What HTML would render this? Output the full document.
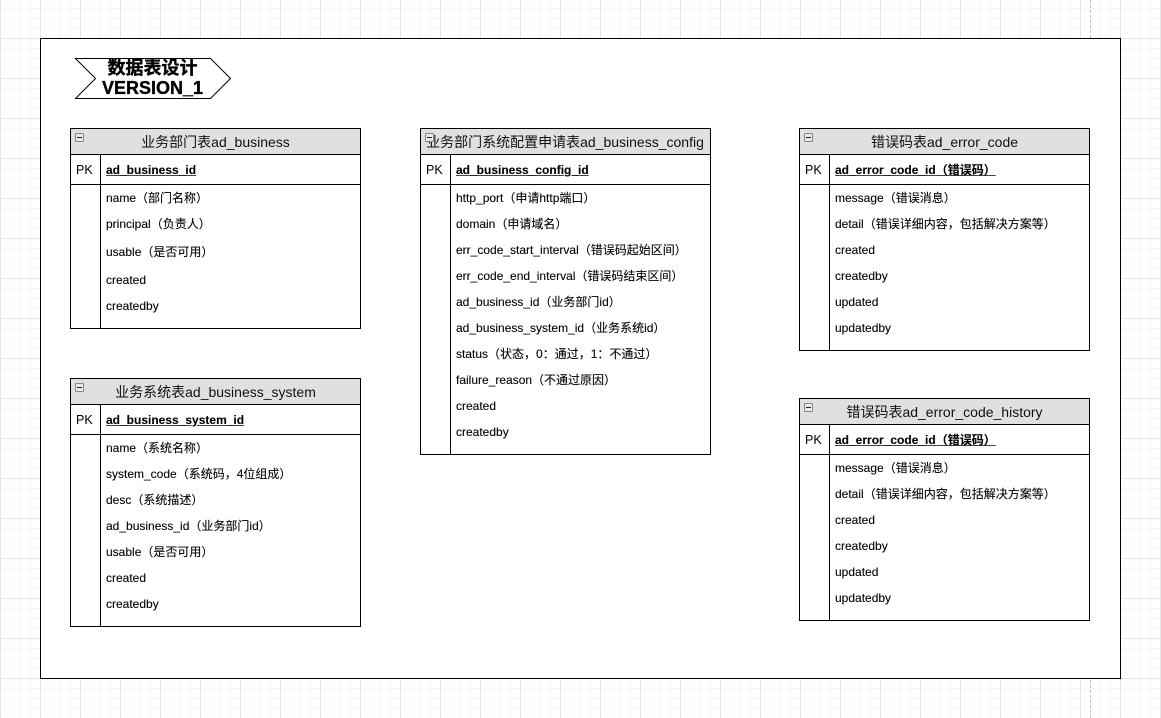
<!DOCTYPE html>
<html lang="zh">
<head>
<meta charset="utf-8">
<title>数据表设计</title>
<style>
html,body{margin:0;padding:0;width:1161px;height:718px;overflow:hidden;background:#fff}
body{position:relative;font-family:"Liberation Sans","Noto Sans CJK SC",sans-serif;color:#000;
background-image:
linear-gradient(to right,#e6e6e6 1px,transparent 1px),
linear-gradient(to bottom,#e6e6e6 1px,transparent 1px),
linear-gradient(to right,#f7f7f7 1px,transparent 1px),
linear-gradient(to bottom,#f7f7f7 1px,transparent 1px);
background-size:40px 40px,40px 40px,10px 10px,10px 10px;
background-position:0 0,0 38px,0 0,0 8px}
.a{position:absolute}
.frame{left:40px;top:38px;width:1079px;height:639px;border:1px solid #000;background:#fff}
.dash{left:1090px;top:0;width:0;height:718px;border-left:1px dashed #c4c4c4}
.t{position:absolute;box-sizing:border-box;width:291px;border:1px solid #000;background:#fff}
.h{position:absolute;left:0;top:0;width:289px;height:25px;background:#e0e0e0;border-bottom:1px solid #000;text-align:center;font-size:14px;line-height:26px;white-space:nowrap;color:#111}
.k{position:absolute;left:0;top:26px;width:289px;height:29px;border-bottom:1px solid #000}
.v{position:absolute;left:29px;top:26px;bottom:0;width:1px;background:#000}
.pk{position:absolute;left:5px;top:32px;font-size:12.5px;line-height:18px}
.ico{position:absolute;left:4px;top:4px;box-sizing:border-box;width:9px;height:9px;border:1px solid #808890;border-radius:1px;background:#e4e9ee}
.ico:after{content:"";position:absolute;left:1px;top:3px;width:5px;height:1px;background:#222}
.r,.b{position:absolute;font-size:12px;line-height:18px;white-space:pre;height:18px;-webkit-text-stroke:.1px #000}
.b{font-weight:bold;text-decoration:underline;text-decoration-color:#444}
.x{left:35px}
.ttl{left:75px;width:155px;text-align:center;font-weight:bold;font-size:18px;line-height:22px;height:22px;white-space:nowrap;-webkit-text-stroke:.35px #000}
</style>
</head>
<body>
<div class="a dash"></div>
<div class="a frame"></div>

<svg class="a" style="left:0;top:0" width="1161" height="718">
<polygon points="75.5,58.5 210.5,58.5 230.5,78.5 210.5,98.5 75.5,98.5 95.5,78.5" fill="#fff" stroke="#000" stroke-width="1"/>
</svg>
<div class="a ttl" style="top:57px">数据表设计</div>
<div class="a ttl" style="top:77px">VERSION_1</div>

<div class="t" style="left:70px;top:128px;height:201px">
<div class="h">业务部门表ad_business</div><div class="ico"></div><div class="k"></div><div class="v"></div>
<div class="pk">PK</div>
<div class="b x" style="top:32px">ad_business_id</div>
<div class="r x" style="top:60px">name（部门名称）</div>
<div class="r x" style="top:86px">principal（负责人）</div>
<div class="r x" style="top:114px">usable（是否可用）</div>
<div class="r x" style="top:142px">created</div>
<div class="r x" style="top:168px">createdby</div>
</div>

<div class="t" style="left:70px;top:378px;height:249px">
<div class="h">业务系统表ad_business_system</div><div class="ico"></div><div class="k"></div><div class="v"></div>
<div class="pk">PK</div>
<div class="b x" style="top:32px">ad_business_system_id</div>
<div class="r x" style="top:60px">name（系统名称）</div>
<div class="r x" style="top:86px">system_code（系统码，4位组成）</div>
<div class="r x" style="top:112px">desc（系统描述）</div>
<div class="r x" style="top:138px">ad_business_id（业务部门id）</div>
<div class="r x" style="top:164px">usable（是否可用）</div>
<div class="r x" style="top:190px">created</div>
<div class="r x" style="top:216px">createdby</div>
</div>

<div class="t" style="left:420px;top:128px;height:327px">
<div class="h" style="text-indent:-1px">业务部门系统配置申请表ad_business_config</div><div class="ico"></div><div class="k"></div><div class="v"></div>
<div class="pk">PK</div>
<div class="b x" style="top:32px">ad_business_config_id</div>
<div class="r x" style="top:60px">http_port（申请http端口）</div>
<div class="r x" style="top:86px">domain（申请域名）</div>
<div class="r x" style="top:112px">err_code_start_interval（错误码起始区间）</div>
<div class="r x" style="top:138px">err_code_end_interval（错误码结束区间）</div>
<div class="r x" style="top:164px">ad_business_id（业务部门id）</div>
<div class="r x" style="top:190px">ad_business_system_id（业务系统id）</div>
<div class="r x" style="top:216px">status（状态，0：通过，1：不通过）</div>
<div class="r x" style="top:242px">failure_reason（不通过原因）</div>
<div class="r x" style="top:268px">created</div>
<div class="r x" style="top:294px">createdby</div>
</div>

<div class="t" style="left:799px;top:128px;height:223px">
<div class="h">错误码表ad_error_code</div><div class="ico"></div><div class="k"></div><div class="v"></div>
<div class="pk">PK</div>
<div class="b x" style="top:32px">ad_error_code_id（错误码）</div>
<div class="r x" style="top:60px">message（错误消息）</div>
<div class="r x" style="top:86px">detail（错误详细内容，包括解决方案等）</div>
<div class="r x" style="top:112px">created</div>
<div class="r x" style="top:138px">createdby</div>
<div class="r x" style="top:164px">updated</div>
<div class="r x" style="top:190px">updatedby</div>
</div>

<div class="t" style="left:799px;top:398px;height:223px">
<div class="h">错误码表ad_error_code_history</div><div class="ico"></div><div class="k"></div><div class="v"></div>
<div class="pk">PK</div>
<div class="b x" style="top:32px">ad_error_code_id（错误码）</div>
<div class="r x" style="top:60px">message（错误消息）</div>
<div class="r x" style="top:86px">detail（错误详细内容，包括解决方案等）</div>
<div class="r x" style="top:112px">created</div>
<div class="r x" style="top:138px">createdby</div>
<div class="r x" style="top:164px">updated</div>
<div class="r x" style="top:190px">updatedby</div>
</div>
</body>
</html>
